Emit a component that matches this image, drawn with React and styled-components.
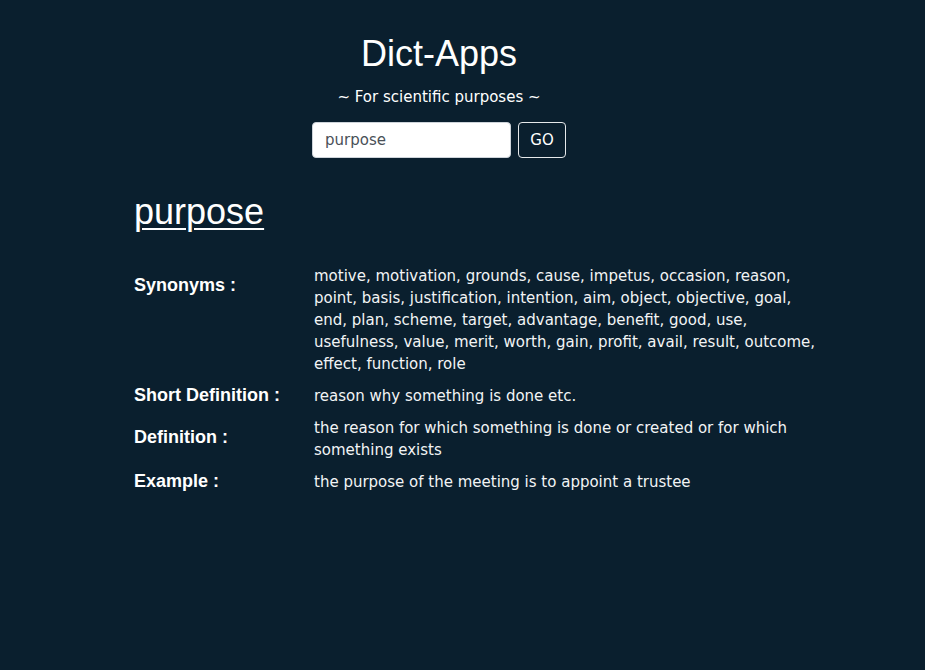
import React from 'react';
import styled, { createGlobalStyle } from 'styled-components';

const GlobalStyle = createGlobalStyle`
	html, body {
		margin: 0;
		padding: 0;
		background: #0a1f2e;
	}
	body {
		font-family: "DejaVu Sans", sans-serif;
		font-size: 15px;
		color: #f2f4f5;
		min-height: 670px;
	}
`;

const entry = {
	word: 'purpose',
	rows: [
		{
			label: 'Synonyms :',
			value:
				'motive, motivation, grounds, cause, impetus, occasion, reason, point, basis, justification, intention, aim, object, objective, goal, end, plan, scheme, target, advantage, benefit, good, use, usefulness, value, merit, worth, gain, profit, avail, result, outcome, effect, function, role',
			multi: true,
		},
		{ label: 'Short Definition :', value: 'reason why something is done etc.' },
		{
			label: 'Definition :',
			value: 'the reason for which something is done or created or for which something exists',
			multi: true,
		},
		{ label: 'Example :', value: 'the purpose of the meeting is to appoint a trustee' },
	],
};

export default function App() {
	return (
		<Page>
			<GlobalStyle />
			<Header>
				<Title>Dict-Apps</Title>
				<Tagline>~ For scientific purposes ~</Tagline>
				<SearchForm onSubmit={(e) => e.preventDefault()}>
					<SearchInput defaultValue={entry.word} />
					<GoButton type="submit">GO</GoButton>
				</SearchForm>
			</Header>
			<Result>
				<Word>{entry.word}</Word>
				<Details>
					{entry.rows.map((row) => (
						<React.Fragment key={row.label}>
							<Label $multi={row.multi}>{row.label}</Label>
							<Value>{row.value}</Value>
						</React.Fragment>
					))}
				</Details>
			</Result>
		</Page>
	);
}

const Page = styled.div`
	width: 878px;
	padding-top: 32px;
`;

const Header = styled.header`
	display: flex;
	flex-direction: column;
	align-items: center;
`;

const Title = styled.h1`
	margin: 0;
	font-family: "Liberation Sans", Arial, sans-serif;
	font-weight: 400;
	font-size: 36px;
	line-height: 43px;
	color: #fff;
`;

const Tagline = styled.p`
	margin: 11px 0 0;
	line-height: 22px;
	color: #fff;
`;

const SearchForm = styled.form`
	display: flex;
	gap: 7px;
	margin-top: 14px;
`;

const SearchInput = styled.input`
	box-sizing: border-box;
	width: 199px;
	height: 36px;
	padding: 0 12px;
	border: 1px solid #ced4da;
	border-radius: 4px;
	background: #fff;
	font-family: "DejaVu Sans", sans-serif;
	font-size: 15px;
	color: #495057;
	outline: none;
`;

const GoButton = styled.button`
	box-sizing: border-box;
	width: 48px;
	height: 36px;
	padding: 0;
	border: 1px solid #e6e9eb;
	border-radius: 4px;
	background: transparent;
	font-family: "DejaVu Sans", sans-serif;
	font-size: 15px;
	color: #fff;
	cursor: pointer;
`;

const Result = styled.main`
	padding-left: 134px;
	margin-top: 32px;
`;

const Word = styled.h2`
	margin: 0;
	font-family: "Liberation Sans", Arial, sans-serif;
	font-weight: 400;
	font-size: 36px;
	line-height: 43px;
	color: #fff;
	text-decoration: underline;
	text-decoration-thickness: 2px;
	text-underline-offset: 4px;
`;

const Details = styled.div`
	display: grid;
	grid-template-columns: 180px 514px;
	row-gap: 10px;
	align-items: start;
	margin-top: 32px;
`;

const Label = styled.div`
	margin-top: ${(p) => (p.$multi ? '10px' : '0')};
	font-family: "Liberation Sans", Arial, sans-serif;
	font-weight: 700;
	font-size: 18px;
	line-height: 21.6px;
	color: #fff;
`;

const Value = styled.div`
	line-height: 22px;
	color: #f2f4f5;
`;
